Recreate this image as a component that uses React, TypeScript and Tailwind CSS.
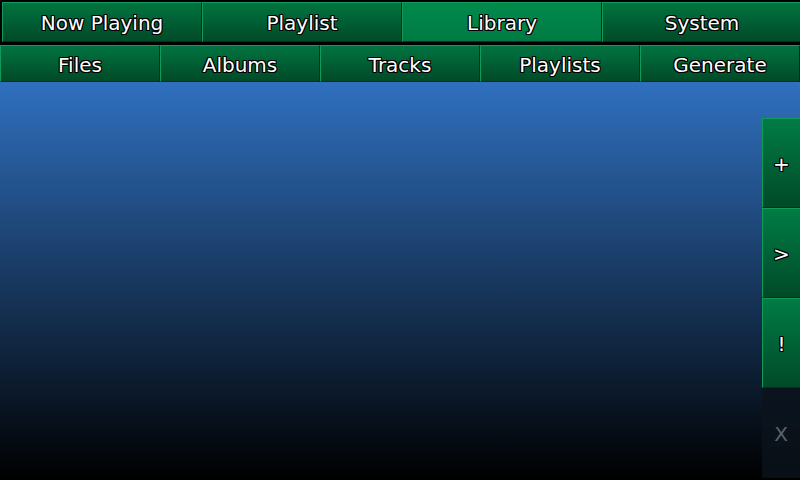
const topTabs = ['Now Playing', 'Playlist', 'Library', 'System'];
const subTabs = ['Files', 'Albums', 'Tracks', 'Playlists', 'Generate'];
const sideButtons = ['+', '>', '!'];

const outline =
  '[text-shadow:1px_0_0_#000,-1px_0_0_#000,0_1px_0_#000,0_-1px_0_#000,1px_1px_0_#000,-1px_-1px_0_#000,1px_-1px_0_#000,-1px_1px_0_#000]';

export default function App() {
  return (
    <div className="w-[800px] h-[480px] overflow-hidden bg-black flex flex-col font-['DejaVu_Sans',sans-serif] text-white text-[20px]">
      <div className="flex h-[42px] pt-[2px] pl-[2px] shrink-0">
        {topTabs.map((t) => (
          <div
            key={t}
            className={`w-[200px] shrink-0 flex items-center justify-center pt-[2px] border-t border-l border-[#109a5a] border-r border-r-[#00331c] border-b border-b-[#00331c] ${
              t === 'Library'
                ? 'bg-linear-to-b/srgb from-[#008a4c] to-[#007a44]'
                : 'bg-linear-to-b/srgb from-[#007440] to-[#004a28]'
            }`}
          >
            <span className={outline}>{t}</span>
          </div>
        ))}
      </div>
      <div className="flex h-[40px] pt-[3px] shrink-0">
        {subTabs.map((t) => (
          <div
            key={t}
            className="w-[160px] shrink-0 flex items-center justify-center pt-[3px] border-t border-l border-[#109a5a] border-r border-r-[#00331c] border-b border-b-[#00331c] bg-linear-to-b/srgb from-[#007440] to-[#004a28]"
          >
            <span className={outline}>{t}</span>
          </div>
        ))}
      </div>
      <div className="flex-1 flex bg-linear-to-b/srgb from-[#3070bf] to-[#000000]">
        <div className="flex-1" />
        <div className="w-[38px] mt-[36px] flex flex-col">
          {sideButtons.map((b) => (
            <div
              key={b}
              className="h-[90px] flex items-center justify-center pt-[2px] border-t border-l border-[#109a5a] border-b border-b-[#00331c] bg-linear-to-b/srgb from-[#007c45] to-[#004a28] text-[20px]"
            >
              <span className={outline}>{b}</span>
            </div>
          ))}
          <div className="h-[90px] flex items-center justify-center pt-[2px] bg-[#0b131c]/80 text-[#5a636c]">
            X
          </div>
        </div>
      </div>
    </div>
  );
}
